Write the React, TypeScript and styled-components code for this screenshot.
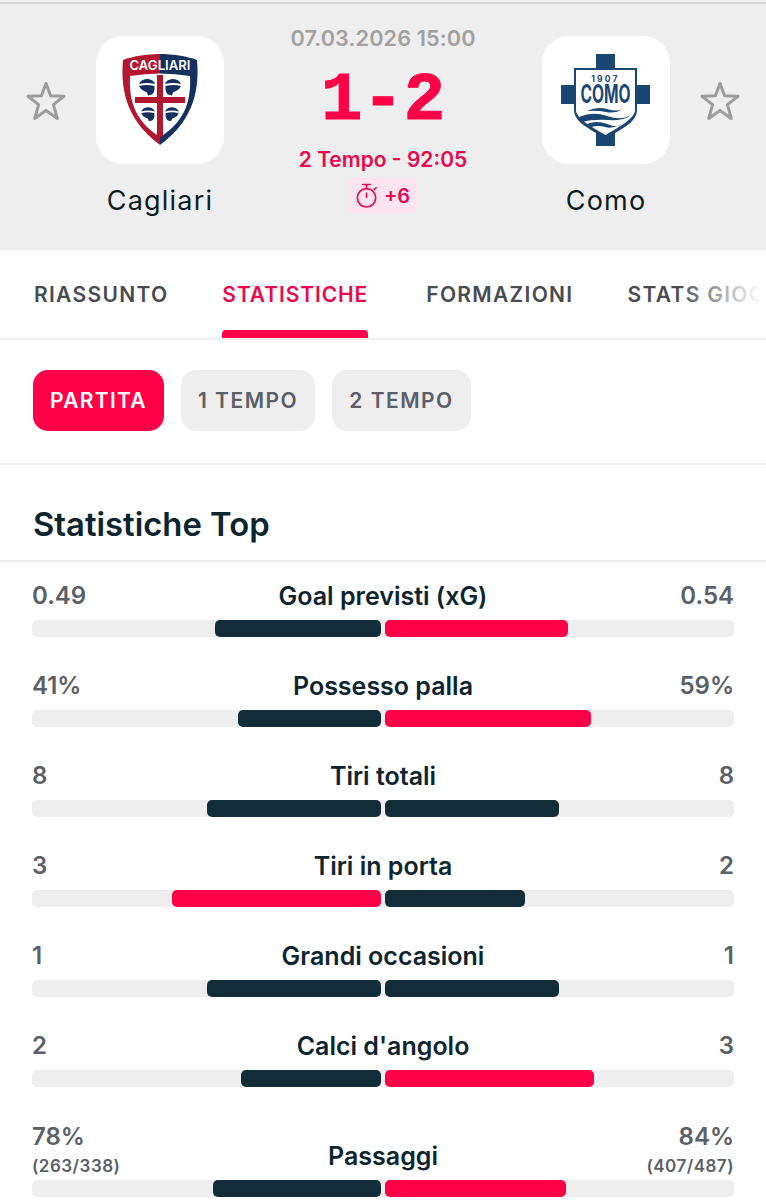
import React from "react";
import styled, { createGlobalStyle } from "styled-components";

const Global = createGlobalStyle`
  html, body { margin: 0; padding: 0; background: #fff; }
  body { font-family: Inter, "Noto Sans", sans-serif; overflow: hidden; }
`;
const Page = styled.div`width: 766px; height: 1200px; overflow: hidden; background: #fff;`;
const TopEdge = styled.div`height: 2px; background: #f1f1f1; border-bottom: 2px solid #d4d4d4;`;
const Header = styled.header`
  height: 246px; background: #eeeeee; display: flex; padding: 0 26px; box-sizing: border-box; align-items: flex-start;
`;
const StarSlot = styled.div`width: 40px; height: 40px; margin-top: 76px; flex: none;`;
const Team = styled.div<{ $side: string }>`
  width: 128px; flex: none; margin: 32px 0 0;
  margin-left: ${(p) => (p.$side === "left" ? "30px" : "0")};
  margin-right: ${(p) => (p.$side === "right" ? "30px" : "0")};
  display: flex; flex-direction: column; align-items: center;
`;
const Logo = styled.div`
  width: 128px; height: 128px; border-radius: 27px; background: #fff;
  display: flex; align-items: center; justify-content: center;
`;
const TeamName = styled.div`
  font-size: 27px; line-height: 34px; margin-top: 20px; letter-spacing: 1.2px; color: #0d1c22; white-space: nowrap;
`;
const Centre = styled.div`flex: 1; display: flex; flex-direction: column; align-items: center; padding-top: 21px;`;
const DateText = styled.div`font-size: 21.7px; line-height: 26px; font-weight: 600; color: #a1a1a1; letter-spacing: .1px;`;
const Score = styled.div`
  font-family: "Liberation Mono", monospace; font-weight: 700; font-size: 69px; line-height: 69px; color: #ff0048;
  margin-top: 16px; height: 76px; -webkit-text-stroke: 1px #ff0048;
`;
const Period = styled.div`font-size: 21px; line-height: 26px; font-weight: 600; color: #e8094f; margin-top: 4px;`;
const Chip = styled.div`
  display: flex; align-items: center; gap: 6px; height: 35px; width: 68px; margin-top: 5px; justify-content: center;
  background: #fde4ef; border-radius: 6px; color: #e8094f; font-size: 20px; font-weight: 600;
`;
const Tabs = styled.nav`
  position: relative; height: 90px; border-bottom: 2px solid #eeeeee; box-sizing: border-box;
  display: flex; padding-left: 34px; gap: 54px; overflow: hidden; white-space: nowrap;
`;
const Tab = styled.div<{ $active?: boolean }>`
  position: relative; flex: none; font-size: 21px; line-height: 90px; font-weight: 600; height: 88px;
  letter-spacing: ${(p) => (p.$active ? "0.9px" : "1.3px")};
  margin-right: ${(p) => (p.$active ? "4px" : "0")};
  color: ${(p) => (p.$active ? "#e8094f" : "#494b52")};
  ${(p) => p.$active && `&::after { content: ""; position: absolute; left: 0; right: 0; bottom: 0; height: 8px; background: #ff0048; border-radius: 4px 4px 0 0; }`}
`;
const Fade = styled.div`
  position: absolute; right: 0; top: 0; bottom: 0; width: 90px;
  background: linear-gradient(to right, rgba(255,255,255,0), #fff 95%);
`;
const Pills = styled.div`
  display: flex; gap: 17px; padding: 30px 32px 32px 33px; border-bottom: 2px solid #eeeeee; height: 125px; box-sizing: border-box;
`;
const Pill = styled.div<{ $active?: boolean }>`
  height: 61px; padding: 0 17px; border-radius: 15px; display: flex; align-items: center;
  font-size: 21px; font-weight: 600;
  letter-spacing: ${(p) => (p.$active ? "1.3px" : "1.5px")};
  background: ${(p) => (p.$active ? "#ff0048" : "#eeeeee")};
  color: ${(p) => (p.$active ? "#fff" : "#5b6066")};
`;
const Section = styled.h2`
  margin: 0; height: 97px; box-sizing: border-box; padding: 39px 33px 0; font-size: 32.8px; line-height: 40px; font-weight: 600;
  color: #0d2530; border-bottom: 2px solid #eeeeee;
`;
const Rows = styled.div`display: flex; flex-direction: column; padding: 0 32px;`;
const Row = styled.div<{ $tall?: boolean }>`
  height: ${(p) => (p.$tall ? "110px" : "90px")}; box-sizing: border-box; display: flex; flex-direction: column; justify-content: flex-end; padding-bottom: 15px;
`;
const Line = styled.div<{ $tall?: boolean }>`
  display: flex; justify-content: space-between; align-items: center; position: relative;
  margin-bottom: ${(p) => (p.$tall ? "2px" : "7px")};
`;
const Val = styled.div<{ $right?: boolean }>`
  display: flex; flex-direction: column; font-size: 24px; line-height: 34px; font-weight: 600; color: #5b6066;
  align-items: ${(p) => (p.$right ? "flex-end" : "flex-start")};
`;
const Sub = styled.span`font-size: 17px; line-height: 24px; font-weight: 600; letter-spacing: .5px;`;
const Label = styled.div<{ $tall?: boolean }>`
  position: absolute; left: 0; right: 0; top: ${(p) => (p.$tall ? "19px" : "0")};
  text-align: center; font-size: 25px; line-height: 34px; font-weight: 600; color: #0d2530;
`;
const Track = styled.div`height: 17px; background: #eeeeee; border-radius: 5px; display: flex; gap: 4px;`;
const Half = styled.div<{ $side: "l" | "r" }>`
  flex: 1; display: flex; justify-content: ${(p) => (p.$side === "l" ? "flex-end" : "flex-start")};
`;
const Bar = styled.div<{ $hot?: boolean }>`
  height: 17px; border-radius: 5px; background: ${(p) => (p.$hot ? "#ff0048" : "#122d38")};
`;

const Star = () => (
  <svg width="40" height="40" viewBox="0 0 40 40" fill="none" stroke="#9c9c9c" strokeWidth="3" strokeLinejoin="round">
    <path d="M20 3.5 L24.6 15.8 L38 16.3 L27.4 24.6 L31.3 38.5 L20 30.5 L8.7 38.5 L12.6 24.6 L2 16.3 L15.4 15.8 Z" />
  </svg>
);

const Moor = ({ x, y, s = 1, flip = false }: { x: number; y: number; s?: number; flip?: boolean }) => (
  <g transform={`translate(${x} ${y}) scale(${flip ? -s : s} ${s})`} fill="#14305f">
    <path d="M-8 -3 Q-6 -8 1 -8 Q7 -7 8 -3 Q0 -5 -8 -3 Z" />
    <path d="M-8 -1 Q0 -3 7.5 -1 Q8 5 5 7.5 L1 8.5 L0 5.5 L-3 4 Q-7 2 -8 -1 Z" />
  </g>
);

const Cagliari = () => (
  <svg width="78" height="92" viewBox="0 0 78 92">
    <path d="M39 0 C28 0 12 2 2 6 C0 30 2 64 39 91 Z" fill="#b3162f" />
    <path d="M39 0 C50 0 66 2 76 6 C78 30 76 64 39 91 Z" fill="#14305f" />
    <path d="M9 22 Q39 17 69 22 C70 44 66 66 39 83 C12 66 8 44 9 22 Z" fill="#fff" />
    <rect x="36" y="21" width="6" height="62" fill="#b3162f" />
    <rect x="14" y="43" width="50" height="6" fill="#b3162f" />
    <Moor x={26} y={33} />
    <Moor x={52} y={33} flip />
    <Moor x={27} y={60} s={0.85} />
    <Moor x={51} y={60} s={0.85} flip />
    <text x="39" y="16" textAnchor="middle" fontFamily="Inter, sans-serif" fontWeight="600" fontSize="13" fill="#fff" textLength="61" lengthAdjust="spacingAndGlyphs">CAGLIARI</text>
  </svg>
);

const Como = () => (
  <svg width="90" height="92" viewBox="0 0 90 92">
    <path d="M35 0 H54 V14 H76 V31 H89 V50 H76 V56 C76 66 66 72 54 79 V92 H35 V79 C23 72 13 66 13 56 V50 H0 V31 H13 V14 H35 Z" fill="#1a4674" />
    <path d="M15 16 H74 V56 C74 64 60 72 44.5 81 C29 72 15 64 15 56 Z" fill="#fff" />
    <text x="44.5" y="28" textAnchor="middle" fontFamily="Inter, sans-serif" fontWeight="700" fontSize="8.5" letterSpacing="2.2" fill="#1a4674">1907</text>
    <text x="44.5" y="49" textAnchor="middle" fontFamily="Inter, sans-serif" fontWeight="700" fontSize="25" fill="#1a4674" textLength="50" lengthAdjust="spacingAndGlyphs">COMO</text>
    <path d="M26 57 Q36 52 46 55 T62 55 Q54 60 45 58 T26 57 Z" fill="#1a4674" />
    <path d="M18 63 Q32 57 46 62 T70 61 Q64 67 48 66 T21 68 Z" fill="#1a4674" />
    <path d="M26 70 Q36 66 46 70 T60 71 Q50 75 44 73 T30 73 Z" fill="#1a4674" />
  </svg>
);

const Watch = () => (
  <svg width="22" height="26" viewBox="0 0 24 28" fill="none" stroke="#e8094f" strokeWidth="1.8" strokeLinecap="round">
    <circle cx="11.5" cy="16" r="10" />
    <path d="M7.5 1.5 H15.5 M11.5 1.5 V6 M11.5 11 V15.5 M20 7 L22 5" />
  </svg>
);

type Stat = { label: string; l: string; r: string; lw: number; rw: number; hot: "l" | "r" | "n"; ls?: string; rs?: string };
const stats: Stat[] = [
  { label: "Goal previsti (xG)", l: "0.49", r: "0.54", lw: 166, rw: 183, hot: "r" },
  { label: "Possesso palla", l: "41%", r: "59%", lw: 143, rw: 206, hot: "r" },
  { label: "Tiri totali", l: "8", r: "8", lw: 174, rw: 174, hot: "n" },
  { label: "Tiri in porta", l: "3", r: "2", lw: 209, rw: 140, hot: "l" },
  { label: "Grandi occasioni", l: "1", r: "1", lw: 174, rw: 174, hot: "n" },
  { label: "Calci d'angolo", l: "2", r: "3", lw: 140, rw: 209, hot: "r" },
  { label: "Passaggi", l: "78%", r: "84%", lw: 168, rw: 181, hot: "r", ls: "(263/338)", rs: "(407/487)" },
];

export default function App() {
  return (
    <Page>
      <Global />
      <TopEdge />
      <Header>
        <StarSlot><Star /></StarSlot>
        <Team $side="left">
          <Logo><Cagliari /></Logo>
          <TeamName>Cagliari</TeamName>
        </Team>
        <Centre>
          <DateText>07.03.2026 15:00</DateText>
          <Score>1-2</Score>
          <Period>2 Tempo - 92:05</Period>
          <Chip><Watch />+6</Chip>
        </Centre>
        <Team $side="right">
          <Logo><Como /></Logo>
          <TeamName>Como</TeamName>
        </Team>
        <StarSlot><Star /></StarSlot>
      </Header>
      <Tabs>
        <Tab>RIASSUNTO</Tab>
        <Tab $active>STATISTICHE</Tab>
        <Tab>FORMAZIONI</Tab>
        <Tab>STATS GIOCATORI</Tab>
        <Fade />
      </Tabs>
      <Pills>
        <Pill $active>PARTITA</Pill>
        <Pill>1 TEMPO</Pill>
        <Pill>2 TEMPO</Pill>
      </Pills>
      <Section>Statistiche Top</Section>
      <Rows>
        {stats.map((s) => (
          <Row key={s.label} $tall={!!s.ls}>
            <Line $tall={!!s.ls}>
              <Val>{s.l}{s.ls && <Sub>{s.ls}</Sub>}</Val>
              <Label $tall={!!s.ls}>{s.label}</Label>
              <Val $right>{s.r}{s.rs && <Sub>{s.rs}</Sub>}</Val>
            </Line>
            <Track>
              <Half $side="l"><Bar $hot={s.hot === "l"} style={{ width: s.lw }} /></Half>
              <Half $side="r"><Bar $hot={s.hot === "r"} style={{ width: s.rw }} /></Half>
            </Track>
          </Row>
        ))}
      </Rows>
    </Page>
  );
}
